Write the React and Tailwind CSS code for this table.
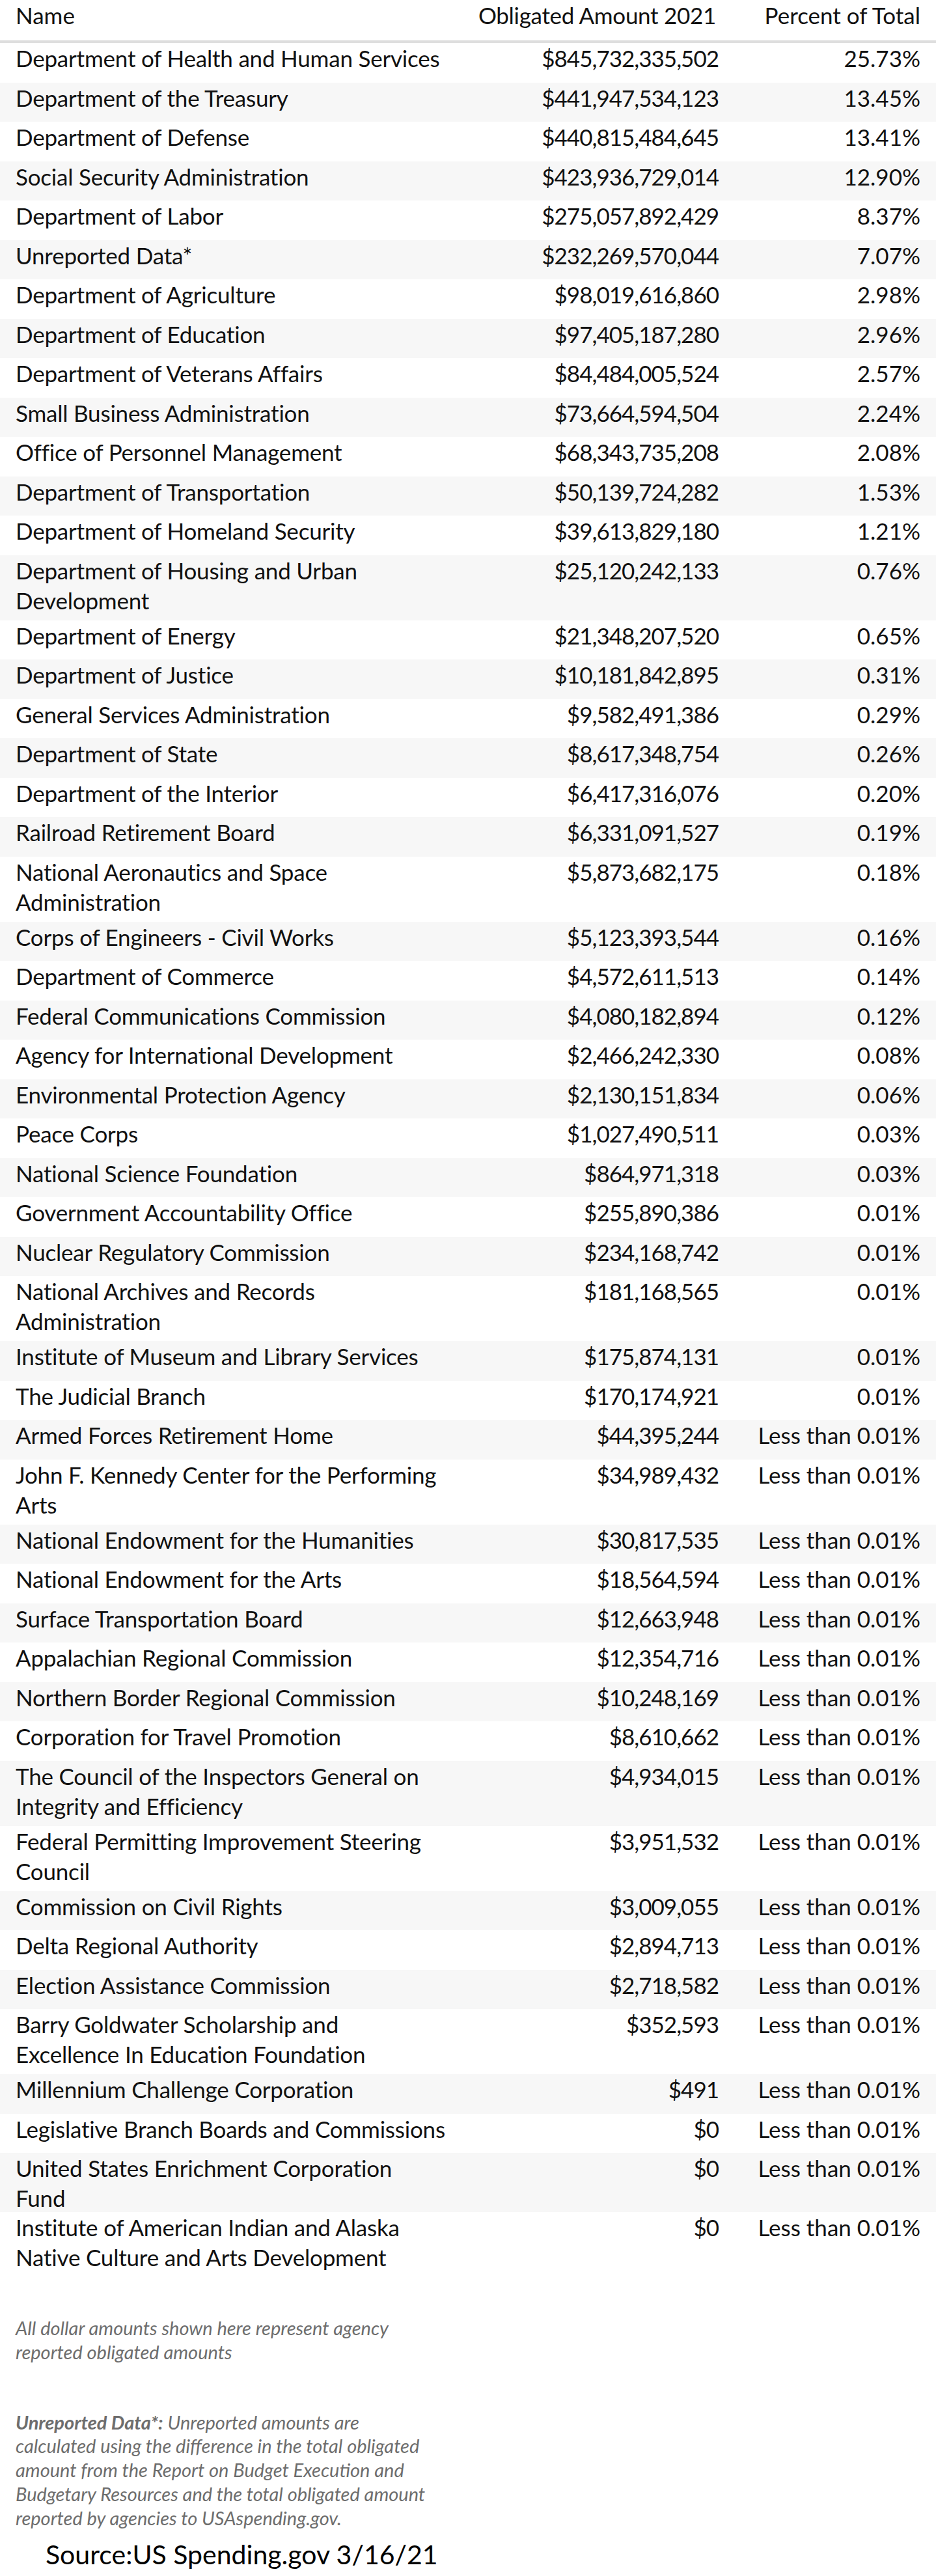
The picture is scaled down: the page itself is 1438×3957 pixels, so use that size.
import React from "react";

const L = "Less than 0.01%";
const rows = [
  [["Department of Health and Human Services"], "$845,732,335,502", "25.73%"],
  [["Department of the Treasury"], "$441,947,534,123", "13.45%"],
  [["Department of Defense"], "$440,815,484,645", "13.41%"],
  [["Social Security Administration"], "$423,936,729,014", "12.90%"],
  [["Department of Labor"], "$275,057,892,429", "8.37%"],
  [["Unreported Data*"], "$232,269,570,044", "7.07%"],
  [["Department of Agriculture"], "$98,019,616,860", "2.98%"],
  [["Department of Education"], "$97,405,187,280", "2.96%"],
  [["Department of Veterans Affairs"], "$84,484,005,524", "2.57%"],
  [["Small Business Administration"], "$73,664,594,504", "2.24%"],
  [["Office of Personnel Management"], "$68,343,735,208", "2.08%"],
  [["Department of Transportation"], "$50,139,724,282", "1.53%"],
  [["Department of Homeland Security"], "$39,613,829,180", "1.21%"],
  [["Department of Housing and Urban", "Development"], "$25,120,242,133", "0.76%"],
  [["Department of Energy"], "$21,348,207,520", "0.65%"],
  [["Department of Justice"], "$10,181,842,895", "0.31%"],
  [["General Services Administration"], "$9,582,491,386", "0.29%"],
  [["Department of State"], "$8,617,348,754", "0.26%"],
  [["Department of the Interior"], "$6,417,316,076", "0.20%"],
  [["Railroad Retirement Board"], "$6,331,091,527", "0.19%"],
  [["National Aeronautics and Space", "Administration"], "$5,873,682,175", "0.18%"],
  [["Corps of Engineers - Civil Works"], "$5,123,393,544", "0.16%"],
  [["Department of Commerce"], "$4,572,611,513", "0.14%"],
  [["Federal Communications Commission"], "$4,080,182,894", "0.12%"],
  [["Agency for International Development"], "$2,466,242,330", "0.08%"],
  [["Environmental Protection Agency"], "$2,130,151,834", "0.06%"],
  [["Peace Corps"], "$1,027,490,511", "0.03%"],
  [["National Science Foundation"], "$864,971,318", "0.03%"],
  [["Government Accountability Office"], "$255,890,386", "0.01%"],
  [["Nuclear Regulatory Commission"], "$234,168,742", "0.01%"],
  [["National Archives and Records", "Administration"], "$181,168,565", "0.01%"],
  [["Institute of Museum and Library Services"], "$175,874,131", "0.01%"],
  [["The Judicial Branch"], "$170,174,921", "0.01%"],
  [["Armed Forces Retirement Home"], "$44,395,244", L],
  [["John F. Kennedy Center for the Performing", "Arts"], "$34,989,432", L],
  [["National Endowment for the Humanities"], "$30,817,535", L],
  [["National Endowment for the Arts"], "$18,564,594", L],
  [["Surface Transportation Board"], "$12,663,948", L],
  [["Appalachian Regional Commission"], "$12,354,716", L],
  [["Northern Border Regional Commission"], "$10,248,169", L],
  [["Corporation for Travel Promotion"], "$8,610,662", L],
  [["The Council of the Inspectors General on", "Integrity and Efficiency"], "$4,934,015", L],
  [["Federal Permitting Improvement Steering", "Council"], "$3,951,532", L],
  [["Commission on Civil Rights"], "$3,009,055", L],
  [["Delta Regional Authority"], "$2,894,713", L],
  [["Election Assistance Commission"], "$2,718,582", L],
  [["Barry Goldwater Scholarship and", "Excellence In Education Foundation"], "$352,593", L],
  [["Millennium Challenge Corporation"], "$491", L],
  [["Legislative Branch Boards and Commissions"], "$0", L],
  [["United States Enrichment Corporation", "Fund"], "$0", L, "short"],
  [["Institute of American Indian and Alaska", "Native Culture and Arts Development"], "$0", L],
];

function rowHeight(name, flag) {
  if (flag === "short") return "h-[91px]";
  return name.length > 1 ? "h-[100px]" : "h-[60.5px]";
}

export default function App() {
  return (
    <div className="w-[1438px] bg-white text-[#111] font-['Lato',sans-serif]">
      <div className="text-[35px] leading-[46px]">
        <div className="grid grid-cols-[720px_398px_320px] h-[62px] box-content border-b-4 border-[#dedede] whitespace-nowrap">
          <div className="pl-[24px]">Name</div>
          <div className="text-right pr-[18px] tracking-[-0.3px]">Obligated Amount 2021</div>
          <div className="text-right pr-[24px]">Percent of Total</div>
        </div>
        {rows.map(([name, amt, pct, flag], i) => (
          <div
            key={i}
            className={
              "grid grid-cols-[720px_398px_320px] whitespace-nowrap " +
              rowHeight(name, flag) +
              " " +
              (i % 2 === 1 ? "bg-[#f7f7f7]" : "bg-white")
            }
          >
            <div className="pl-[24px] tracking-[-0.2px]">
              {name.map((l, j) => (
                <div key={j}>{l}</div>
              ))}
            </div>
            <div className="text-right pr-[14px] tracking-[-1px]">{amt}</div>
            <div className="text-right pr-[24px]">{pct}</div>
          </div>
        ))}
      </div>

      <div className="pl-[24px] italic text-[#6d6d6d] text-[29px] leading-[36.8px] whitespace-nowrap">
        <p className="mt-[60px]">
          All dollar amounts shown here represent agency
          <br />
          reported obligated amounts
        </p>
        <p className="mt-[71px]">
          <span className="font-bold">Unreported Data*:</span> Unreported amounts are
          <br />
          calculated using the difference in the total obligated
          <br />
          amount from the Report on Budget Execution and
          <br />
          Budgetary Resources and the total obligated amount
          <br />
          reported by agencies to USAspending.gov.
        </p>
      </div>

      <div className="pl-[70px] mt-[12px] pb-[8px] text-[41px] leading-[50px] text-black whitespace-nowrap">
        Source:US Spending.gov 3/16/21
      </div>
    </div>
  );
}
